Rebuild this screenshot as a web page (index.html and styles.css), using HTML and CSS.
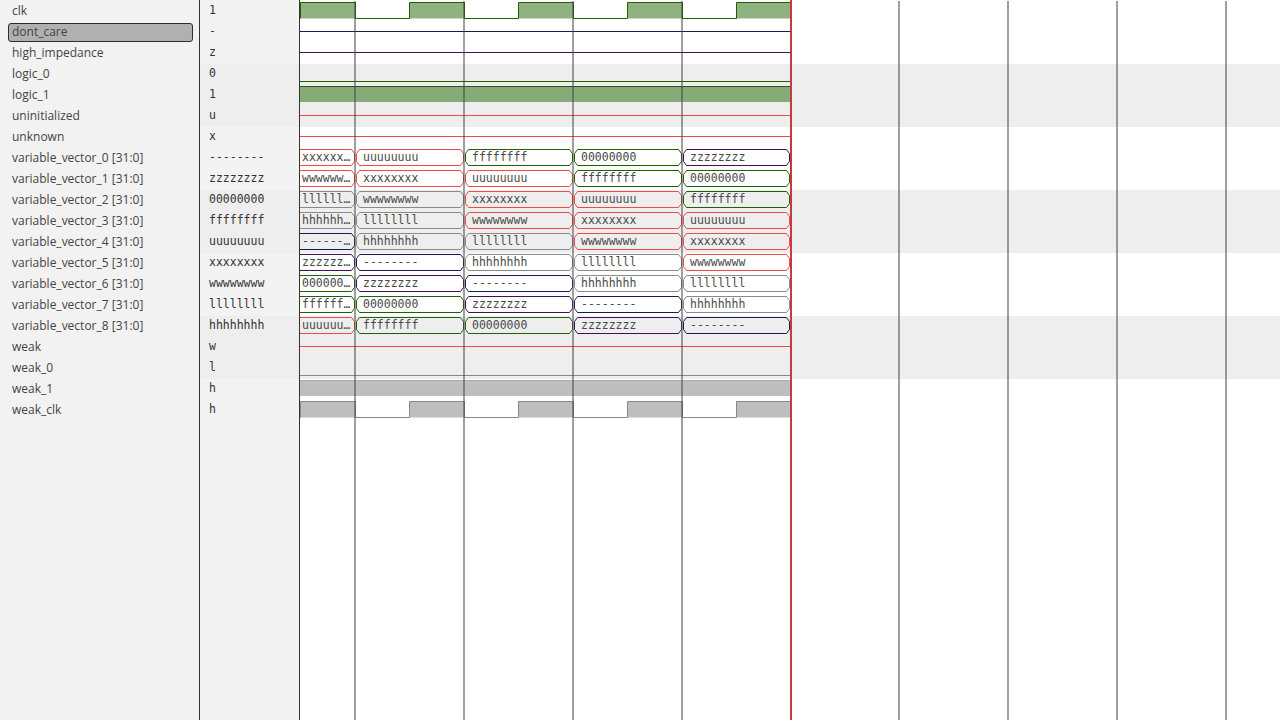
FILE: index.html
```html
<!DOCTYPE html>
<html>
<head>
<meta charset="utf-8">
<title>Waveform viewer</title>
<link rel="stylesheet" href="styles.css">
</head>
<body>
<svg class="defs" width="0" height="0" aria-hidden="true">
  <defs>
    <polygon id="s1" points="-0.5,2.5 51.5,2.5 54.5,6.5 54.5,14.5 51.5,18.5 -0.5,18.5 -3.5,14.5 -3.5,6.5"/>
    <polygon id="s2" points="59.5,2.5 160.5,2.5 163.5,6.5 163.5,14.5 160.5,18.5 59.5,18.5 56.5,14.5 56.5,6.5"/>
    <polygon id="s3" points="168.5,2.5 269.5,2.5 272.5,6.5 272.5,14.5 269.5,18.5 168.5,18.5 165.5,14.5 165.5,6.5"/>
    <polygon id="s4" points="277.5,2.5 378.5,2.5 381.5,6.5 381.5,14.5 378.5,18.5 277.5,18.5 274.5,14.5 274.5,6.5"/>
    <polygon id="s5" points="386.5,2.5 486.5,2.5 489.5,6.5 489.5,14.5 486.5,18.5 386.5,18.5 383.5,14.5 383.5,6.5"/>
  </defs>
</svg>
<div class="app">
  <div class="names">
    <div class="nrow"><span class="nlabel">clk</span></div>
    <div class="nrow"><span class="nlabel sel">dont_care</span></div>
    <div class="nrow"><span class="nlabel">high_impedance</span></div>
    <div class="nrow"><span class="nlabel">logic_0</span></div>
    <div class="nrow"><span class="nlabel">logic_1</span></div>
    <div class="nrow"><span class="nlabel">uninitialized</span></div>
    <div class="nrow"><span class="nlabel">unknown</span></div>
    <div class="nrow"><span class="nlabel">variable_vector_0 [31:0]</span></div>
    <div class="nrow"><span class="nlabel">variable_vector_1 [31:0]</span></div>
    <div class="nrow"><span class="nlabel">variable_vector_2 [31:0]</span></div>
    <div class="nrow"><span class="nlabel">variable_vector_3 [31:0]</span></div>
    <div class="nrow"><span class="nlabel">variable_vector_4 [31:0]</span></div>
    <div class="nrow"><span class="nlabel">variable_vector_5 [31:0]</span></div>
    <div class="nrow"><span class="nlabel">variable_vector_6 [31:0]</span></div>
    <div class="nrow"><span class="nlabel">variable_vector_7 [31:0]</span></div>
    <div class="nrow"><span class="nlabel">variable_vector_8 [31:0]</span></div>
    <div class="nrow"><span class="nlabel">weak</span></div>
    <div class="nrow"><span class="nlabel">weak_0</span></div>
    <div class="nrow"><span class="nlabel">weak_1</span></div>
    <div class="nrow"><span class="nlabel">weak_clk</span></div>
  </div>

  <div class="values">
    <div class="vrow">1</div>
    <div class="vrow">-</div>
    <div class="vrow">z</div>
    <div class="vrow band top">0</div>
    <div class="vrow band">1</div>
    <div class="vrow band">u</div>
    <div class="vrow after">x</div>
    <div class="vrow">--------</div>
    <div class="vrow">zzzzzzzz</div>
    <div class="vrow band top">00000000</div>
    <div class="vrow band">ffffffff</div>
    <div class="vrow band">uuuuuuuu</div>
    <div class="vrow after">xxxxxxxx</div>
    <div class="vrow">wwwwwwww</div>
    <div class="vrow">llllllll</div>
    <div class="vrow band top">hhhhhhhh</div>
    <div class="vrow band">w</div>
    <div class="vrow band">l</div>
    <div class="vrow after">h</div>
    <div class="vrow">h</div>
  </div>

  <div class="wave">
    <!-- clk -->
    <div class="wrow">
      <svg class="sig" width="491" height="21">
        <path class="fill-g" d="M0.5 2.5H55.5V18.5H0.5Z M109.5 2.5H164.5V18.5H109.5Z M218.5 2.5H273.5V18.5H218.5Z M327.5 2.5H382.5V18.5H327.5Z M436.5 2.5H491V18.5H436.5Z"/>
        <path class="ln-g" d="M0.5 18.5V2.5H55.5V18.5H109.5V2.5H164.5V18.5H218.5V2.5H273.5V18.5H327.5V2.5H382.5V18.5H436.5V2.5H491"/>
      </svg>
    </div>
    <!-- dont_care -->
    <div class="wrow">
      <svg class="sig" width="491" height="21"><path class="ln-n" d="M0 10.5H491"/></svg>
    </div>
    <!-- high_impedance -->
    <div class="wrow">
      <svg class="sig" width="491" height="21"><path class="ln-p" d="M0 10.5H491"/></svg>
    </div>
    <!-- logic_0 -->
    <div class="wrow band top">
      <svg class="sig" width="491" height="21"><path class="ln-g" d="M0 18.5H491"/></svg>
    </div>
    <!-- logic_1 -->
    <div class="wrow band">
      <svg class="sig" width="491" height="21">
        <path class="fill-g" d="M0 2.5H491V18H0Z"/>
        <path class="ln-g" d="M0 2.5H491"/>
      </svg>
    </div>
    <!-- uninitialized -->
    <div class="wrow band">
      <svg class="sig" width="491" height="21"><path class="ln-r" d="M0 10.5H491"/></svg>
    </div>
    <!-- unknown -->
    <div class="wrow after">
      <svg class="sig" width="491" height="21"><path class="ln-r" d="M0 10.5H491"/></svg>
    </div>

    <!-- variable_vector_0 -->
    <div class="wrow">
      <svg class="sig" width="491" height="21"><use href="#s1" class="k-red"/><use href="#s2" class="k-red"/><use href="#s3" class="k-grn"/><use href="#s4" class="k-grn"/><use href="#s5" class="k-pur"/></svg>
      <div class="labels"><span class="seg first">xxxxxxxx</span><span class="seg">uuuuuuuu</span><span class="seg">ffffffff</span><span class="seg">00000000</span><span class="seg">zzzzzzzz</span></div>
    </div>
    <!-- variable_vector_1 -->
    <div class="wrow">
      <svg class="sig" width="491" height="21"><use href="#s1" class="k-red"/><use href="#s2" class="k-red"/><use href="#s3" class="k-red"/><use href="#s4" class="k-grn"/><use href="#s5" class="k-grn"/></svg>
      <div class="labels"><span class="seg first">wwwwwwww</span><span class="seg">xxxxxxxx</span><span class="seg">uuuuuuuu</span><span class="seg">ffffffff</span><span class="seg">00000000</span></div>
    </div>
    <!-- variable_vector_2 -->
    <div class="wrow band top">
      <svg class="sig" width="491" height="21"><use href="#s1" class="k-gry"/><use href="#s2" class="k-gry"/><use href="#s3" class="k-red"/><use href="#s4" class="k-red"/><use href="#s5" class="k-grn"/></svg>
      <div class="labels"><span class="seg first">llllllll</span><span class="seg">wwwwwwww</span><span class="seg">xxxxxxxx</span><span class="seg">uuuuuuuu</span><span class="seg">ffffffff</span></div>
    </div>
    <!-- variable_vector_3 -->
    <div class="wrow band">
      <svg class="sig" width="491" height="21"><use href="#s1" class="k-gry"/><use href="#s2" class="k-gry"/><use href="#s3" class="k-red"/><use href="#s4" class="k-red"/><use href="#s5" class="k-red"/></svg>
      <div class="labels"><span class="seg first">hhhhhhhh</span><span class="seg">llllllll</span><span class="seg">wwwwwwww</span><span class="seg">xxxxxxxx</span><span class="seg">uuuuuuuu</span></div>
    </div>
    <!-- variable_vector_4 -->
    <div class="wrow band">
      <svg class="sig" width="491" height="21"><use href="#s1" class="k-nav"/><use href="#s2" class="k-gry"/><use href="#s3" class="k-gry"/><use href="#s4" class="k-red"/><use href="#s5" class="k-red"/></svg>
      <div class="labels"><span class="seg first">--------</span><span class="seg">hhhhhhhh</span><span class="seg">llllllll</span><span class="seg">wwwwwwww</span><span class="seg">xxxxxxxx</span></div>
    </div>
    <!-- variable_vector_5 -->
    <div class="wrow after">
      <svg class="sig" width="491" height="21"><use href="#s1" class="k-pur"/><use href="#s2" class="k-nav"/><use href="#s3" class="k-gry"/><use href="#s4" class="k-gry"/><use href="#s5" class="k-red"/></svg>
      <div class="labels"><span class="seg first">zzzzzzzz</span><span class="seg">--------</span><span class="seg">hhhhhhhh</span><span class="seg">llllllll</span><span class="seg">wwwwwwww</span></div>
    </div>
    <!-- variable_vector_6 -->
    <div class="wrow">
      <svg class="sig" width="491" height="21"><use href="#s1" class="k-grn"/><use href="#s2" class="k-pur"/><use href="#s3" class="k-nav"/><use href="#s4" class="k-gry"/><use href="#s5" class="k-gry"/></svg>
      <div class="labels"><span class="seg first">00000000</span><span class="seg">zzzzzzzz</span><span class="seg">--------</span><span class="seg">hhhhhhhh</span><span class="seg">llllllll</span></div>
    </div>
    <!-- variable_vector_7 -->
    <div class="wrow">
      <svg class="sig" width="491" height="21"><use href="#s1" class="k-grn"/><use href="#s2" class="k-grn"/><use href="#s3" class="k-pur"/><use href="#s4" class="k-nav"/><use href="#s5" class="k-gry"/></svg>
      <div class="labels"><span class="seg first">ffffffff</span><span class="seg">00000000</span><span class="seg">zzzzzzzz</span><span class="seg">--------</span><span class="seg">hhhhhhhh</span></div>
    </div>
    <!-- variable_vector_8 -->
    <div class="wrow band top">
      <svg class="sig" width="491" height="21"><use href="#s1" class="k-red"/><use href="#s2" class="k-grn"/><use href="#s3" class="k-grn"/><use href="#s4" class="k-pur"/><use href="#s5" class="k-nav"/></svg>
      <div class="labels"><span class="seg first">uuuuuuuu</span><span class="seg">ffffffff</span><span class="seg">00000000</span><span class="seg">zzzzzzzz</span><span class="seg">--------</span></div>
    </div>

    <!-- weak -->
    <div class="wrow band">
      <svg class="sig" width="491" height="21"><path class="ln-r" d="M0 10.5H491"/></svg>
    </div>
    <!-- weak_0 -->
    <div class="wrow band">
      <svg class="sig" width="491" height="21"><path class="ln-w" d="M0 18.5H491"/></svg>
    </div>
    <!-- weak_1 -->
    <div class="wrow after">
      <svg class="sig" width="491" height="21">
        <path class="fill-w" d="M0 2.5H491V18H0Z"/>
        <path class="ln-wl" d="M0 2.5H491"/>
      </svg>
    </div>
    <!-- weak_clk -->
    <div class="wrow">
      <svg class="sig" width="491" height="21">
        <path class="fill-w" d="M0.5 2.5H55.5V18.5H0.5Z M109.5 2.5H164.5V18.5H109.5Z M218.5 2.5H273.5V18.5H218.5Z M327.5 2.5H382.5V18.5H327.5Z M436.5 2.5H491V18.5H436.5Z"/>
        <path class="ln-w" d="M0.5 18.5V2.5H55.5V18.5H109.5V2.5H164.5V18.5H218.5V2.5H273.5V18.5H327.5V2.5H382.5V18.5H436.5V2.5H491"/>
      </svg>
    </div>

    <svg class="grid" width="980" height="720" aria-hidden="true">
      <g class="gl">
        <rect x="54" y="1" width="2" height="719"/>
        <rect x="163" y="1" width="2" height="719"/>
        <rect x="272" y="1" width="2" height="719"/>
        <rect x="381" y="1" width="2" height="719"/>
        <rect x="598" y="1" width="2" height="719"/>
        <rect x="707" y="1" width="2" height="719"/>
        <rect x="816" y="1" width="2" height="719"/>
        <rect x="925" y="1" width="2" height="719"/>
      </g>
      <rect class="cursor" x="490" y="0" width="2" height="720"/>
    </svg>
  </div>
</div>
</body>
</html>
```

FILE: styles.css
```css
html, body {
  margin: 0;
  padding: 0;
  background: #ffffff;
}

.defs {
  position: absolute;
  width: 0;
  height: 0;
  overflow: hidden;
}

.app {
  display: flex;
  width: 1280px;
  height: 720px;
  overflow: hidden;
}

/* ---------- signal names ---------- */
.names {
  flex: none;
  width: 199px;
  border-right: 1px solid #333333;
  background: #f2f2f2;
}

.nrow {
  height: 21px;
  overflow: hidden;
}

.nlabel {
  display: block;
  box-sizing: border-box;
  height: 19px;
  margin: 2px 6px 0 8px;
  padding-left: 3px;
  border: 1px solid transparent;
  border-radius: 3px;
  font-family: "Open Sans", "Noto Sans", sans-serif;
  font-size: 12px;
  line-height: 15px;
  color: #444444;
  white-space: nowrap;
}

.nlabel.sel {
  background: #b0b0b0;
  border-color: #2e2e2e;
}

/* ---------- values column ---------- */
.values {
  flex: none;
  width: 99px;
  border-right: 1px solid #333333;
  background: #f3f3f3;
}

.vrow {
  height: 21px;
  padding-left: 9px;
  font-family: "DejaVu Sans Mono", monospace;
  font-size: 11.5px;
  line-height: 21px;
  color: #333333;
  white-space: nowrap;
}

.vrow.band { background: #eeeeee; }
.vrow.band.top { background: linear-gradient(#f3f3f3 1px, #eeeeee 1px); }
.vrow.after { background: linear-gradient(#eeeeee 1px, #f3f3f3 1px); }

/* ---------- waveform area ---------- */
.wave {
  flex: 1;
  position: relative;
  background: #ffffff;
}

.wrow {
  position: relative;
  height: 21px;
}

.wrow.band { background: #eeeeee; }
.wrow.band.top { background: linear-gradient(#ffffff 1px, #eeeeee 1px); }
.wrow.after { background: linear-gradient(#eeeeee 1px, #ffffff 1px); }

.sig {
  position: absolute;
  left: 0;
  top: 0;
  display: block;
  overflow: hidden;
}

.fill-g { fill: rgba(31, 103, 1, 0.5); stroke: none; }
.fill-w { fill: rgba(125, 125, 125, 0.5); stroke: none; }

.ln-g, .ln-n, .ln-p, .ln-r, .ln-w, .ln-wl {
  fill: none;
  stroke-width: 1;
}
.ln-g { stroke: #206000; }
.ln-n { stroke: #161e50; }
.ln-p { stroke: #420f5e; }
.ln-r { stroke: #f24848; }
.ln-w { stroke: #888888; }
.ln-wl { stroke: #a8a8a8; }

.sig use {
  fill: none;
  stroke-width: 1;
}
.k-red { stroke: #f24848; }
.k-grn { stroke: #206000; }
.k-pur { stroke: #420f5e; }
.k-nav { stroke: #161e50; }
.k-gry { stroke: #8a8a8a; }

.labels {
  position: relative;
  display: flex;
  height: 21px;
}

.seg {
  flex: none;
  box-sizing: border-box;
  width: 109px;
  padding-left: 8px;
  overflow: hidden;
  white-space: nowrap;
  text-overflow: ellipsis;
  font-family: "DejaVu Sans Mono", monospace;
  font-size: 11.5px;
  line-height: 21px;
  color: #4a4a4a;
}

.seg.first {
  width: 55px;
  padding: 0 4px 0 2px;
}

/* grid + cursor overlay */
.grid {
  position: absolute;
  left: 0;
  top: 0;
  pointer-events: none;
}

.gl rect { fill: rgba(64, 64, 64, 0.5); }
.cursor { fill: #c43c3c; }
```
